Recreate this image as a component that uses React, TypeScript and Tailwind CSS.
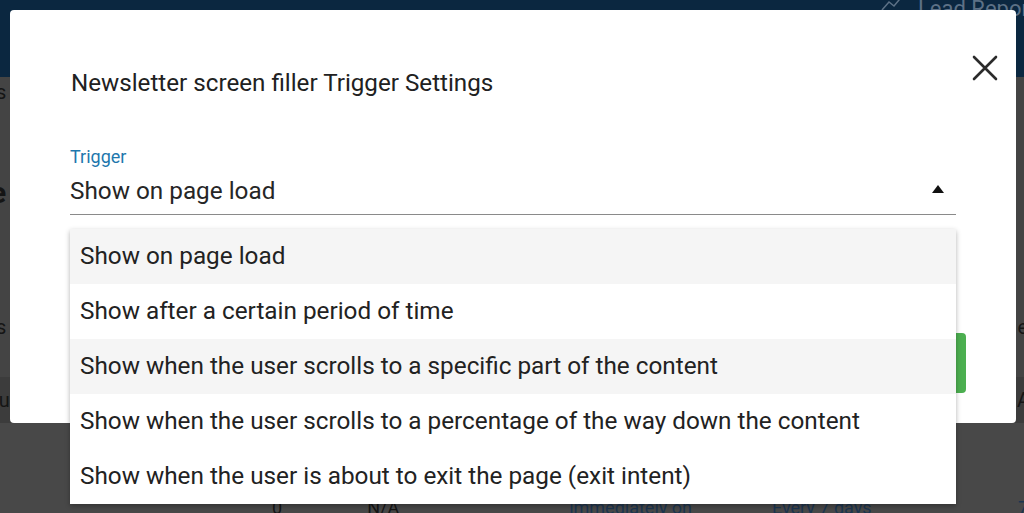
const options = [
    "Show on page load",
    "Show after a certain period of time",
    "Show when the user scrolls to a specific part of the content",
    "Show when the user scrolls to a percentage of the way down the content",
    "Show when the user is about to exit the page (exit intent)",
]

const font = { fontFamily: "Roboto, 'Noto Sans', sans-serif" }

const Background = () => {
    return (
        <div className="flex flex-col w-full h-full">
            <div className="h-[77px] bg-[#0b2740] flex justify-end items-start overflow-hidden">
                <div className="flex items-start gap-3 -mt-[8px] -mr-[24px] text-[#5d7186] text-[22px]">
                    <svg width="26" height="20" viewBox="0 0 26 20" fill="none" stroke="#5d7186" strokeWidth="1.5">
                        <path d="M2 18 L9 10 L14 14 L24 2" />
                    </svg>
                    <span>Lead Reports</span>
                </div>
            </div>
            <div className="flex-1 flex flex-col bg-[#444444] text-[#151515]">
                <div className="h-[30px] flex items-center text-[20px] -ml-[4px]">
                    <span>s</span>
                </div>
                <div className="h-[170px] flex items-center text-[30px] font-bold -ml-[10px]">
                    <span>e</span>
                </div>
                <div className="h-[100px] flex items-center justify-between text-[20px] -ml-[4px] -mr-[4px]">
                    <span>s</span>
                    <span>e</span>
                </div>
                <div className="h-[46px] flex items-center justify-between text-[20px] -ml-[6px] -mr-[6px] bg-[#3c3c3c]">
                    <span>lu</span>
                    <span>A</span>
                </div>
                <div className="flex-1 bg-[#484848] flex items-end text-[18px] -mb-[8px]">
                    <span className="ml-[272px]">0</span>
                    <span className="ml-[85px]">N/A</span>
                    <span className="ml-[170px] text-[#1c3550]">immediately on</span>
                    <span className="ml-[80px] text-[#1c3550]">Every 7 days</span>
                    <span className="ml-auto -mr-[4px] text-[#1c3550]">7</span>
                </div>
            </div>
        </div>
    )
}

const App = () => {
    return (
        <div className="relative w-[1024px] h-[513px] overflow-hidden" style={font}>
            <Background />

            <div className="absolute left-[10px] top-[10px] w-[1006px] h-[413px] bg-white rounded-[4px] pl-[61px] pr-[60px] flex flex-col">
                <div className="flex justify-between items-start">
                    <h2 className="mt-[59px] text-[24.2px] leading-[28px] text-[#212121]">Newsletter screen filler Trigger Settings</h2>
                    <button className="mt-[45px] -mr-[42px]">
                        <svg width="26" height="26" viewBox="0 0 26 26" fill="none" stroke="#2b2b2b" strokeWidth="2.6" strokeLinecap="round">
                            <path d="M2 2 L24 24 M24 2 L2 24" />
                        </svg>
                    </button>
                </div>

                <div className="mt-[49px] relative">
                    <div className="text-[18px] leading-[22px] text-[#1e77ad] -ml-[1px]">Trigger</div>
                    <div className="flex items-center justify-between h-[47px] border-b border-[#8a8a8a] -ml-[1px]">
                        <span className="text-[24.3px] leading-[28px] text-[#262626]">Show on page load</span>
                        <svg width="12" height="8" viewBox="0 0 12 8" className="mr-[12px] -mt-[4px]">
                            <path d="M0 8 L6 0 L12 8 Z" fill="#111" />
                        </svg>
                    </div>

                    <div className="absolute left-[-1px] top-[83px] w-[886px] bg-white shadow-[0_2px_5px_rgba(0,0,0,0.3)] z-10">
                        {options.map((opt, i) => (
                            <div
                                key={i}
                                className={`h-[55px] flex items-center px-[10px] text-[24.3px] text-[#222222] ${i === 0 || i === 2 ? "bg-[#f5f5f5]" : "bg-white"}`}
                            >
                                {opt}
                            </div>
                        ))}
                    </div>
                </div>

                <div className="flex justify-end mt-[118px] -mr-[10px]">
                    <button className="w-[140px] h-[60px] bg-[#4caf50] rounded-[4px] text-white text-[18px]">Save</button>
                </div>
            </div>
        </div>
    )
}

export default App
